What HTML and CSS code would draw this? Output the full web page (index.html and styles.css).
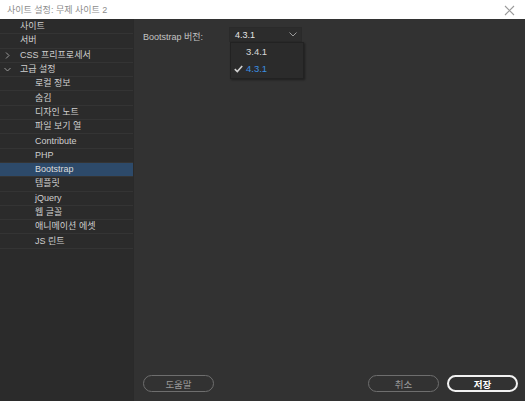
FILE: index.html
```html
<!DOCTYPE html>
<html lang="ko">
<head>
<meta charset="utf-8">
<link rel="stylesheet" href="styles.css">
</head>
<body>
<div class="window">
  <div class="titlebar">
    <span class="title">사이트 설정: 무제 사이트 2</span>
    <svg class="close" width="11" height="11" viewBox="0 0 11 11"><path d="M1 1L10 10M10 1L1 10" stroke="#9a9a9a" stroke-width="1.1"/></svg>
  </div>
  <div class="body">
    <ul class="sidebar">
      <li class="row l0"><span class="chev"></span>사이트</li>
      <li class="row l0"><span class="chev"></span>서버</li>
      <li class="row l0"><span class="chev"><svg width="7" height="7" viewBox="0 0 7 7"><path d="M2 0.5L5 3.5L2 6.5" fill="none" stroke="#9a9a9a" stroke-width="1"/></svg></span>CSS 프리프로세서</li>
      <li class="row l0"><span class="chev"><svg width="7" height="7" viewBox="0 0 7 7"><path d="M0.5 2L3.5 5L6.5 2" fill="none" stroke="#9a9a9a" stroke-width="1"/></svg></span>고급 설정</li>
      <li class="row l1">로컬 정보</li>
      <li class="row l1">숨김</li>
      <li class="row l1">디자인 노트</li>
      <li class="row l1">파일 보기 열</li>
      <li class="row l1">Contribute</li>
      <li class="row l1">PHP</li>
      <li class="row l1 selected">Bootstrap</li>
      <li class="row l1">템플릿</li>
      <li class="row l1">jQuery</li>
      <li class="row l1">웹 글꼴</li>
      <li class="row l1">애니메이션 에셋</li>
      <li class="row l1">JS 린트</li>
    </ul>
    <div class="main">
      <div class="content">
        <div class="field">
          <span class="label">Bootstrap 버전:</span>
          <div class="select-wrap">
            <div class="select">
              <span>4.3.1</span>
              <svg width="8" height="5" viewBox="0 0 8 5"><path d="M0.5 0.5L4 4L7.5 0.5" fill="none" stroke="#9a9a9a" stroke-width="1"/></svg>
            </div>
            <div class="menu">
              <div class="opt"><span class="check"></span>3.4.1</div>
              <div class="opt active"><span class="check"><svg width="9" height="8" viewBox="0 0 9 8"><path d="M0.8 4.2L3.3 6.6L8.2 1" fill="none" stroke="#d0d0d0" stroke-width="1.6"/></svg></span>4.3.1</div>
            </div>
          </div>
        </div>
      </div>
      <div class="footer">
        <button class="btn">도움말</button>
        <div class="spacer"></div>
        <button class="btn">취소</button>
        <button class="btn primary">저장</button>
      </div>
    </div>
  </div>
</div>
</body>
</html>
```
FILE: styles.css
```css
* { box-sizing: border-box; margin: 0; padding: 0; }
html, body { width: 525px; height: 401px; overflow: hidden; }
body {
  font-family: "Liberation Sans", "Noto Sans CJK KR", sans-serif;
  font-size: 9px;
  background: #2b2b2b;
}
.window { display: flex; flex-direction: column; height: 401px; }
.titlebar {
  height: 19px;
  background: #ffffff;
  display: flex;
  align-items: center;
  justify-content: space-between;
  padding: 0 10px 0 7px;
  flex: none;
}
.title { color: #8c8c8c; font-size: 9px; }
.close { margin-top: 1px; }
.body { flex: 1; display: flex; }
.sidebar {
  list-style: none;
  width: 133px;
  background: #2b2b2b;
  flex: none;
  padding-top: 1px;
}
.row {
  height: 14.3px;
  display: flex;
  align-items: center;
  color: #cfcfcf;
  border-bottom: 1px solid #343434;
  line-height: 1;
}
.row.l0 { padding-left: 4px; }
.row.l1 { padding-left: 35px; }
.chev { width: 16px; display: flex; align-items: center; }
.row.selected { background: #2d4a6a; color: #dcdcdc; }
.main {
  flex: 1;
  background: #323232;
  display: flex;
  flex-direction: column;
  border-left: 1px solid #2a2a2a;
}
.content { flex: 1; padding: 8px 0 0 9px; }
.field { display: flex; align-items: flex-start; }
.label { color: #c4c4c4; width: 86px; padding-top: 3px; }
.select-wrap { position: relative; }
.select {
  width: 73px;
  height: 15px;
  background: #2c2c2c;
  border: 1px solid #2a2a2a;
  display: flex;
  align-items: center;
  justify-content: space-between;
  padding: 0 4px 0 5px;
  color: #e6e6e6;
}
.menu {
  position: absolute;
  left: 1px;
  top: 15px;
  width: 74px;
  background: #2b2b2b;
  border: 1px solid #222;
  box-shadow: 1px 1px 2px rgba(0,0,0,0.4);
  padding: 0 0 1px 0;
}
.opt { height: 17px; display: flex; align-items: center; color: #d8d8d8; font-size: 9.5px; }
.opt.active { color: #3b8fe2; }
.check { width: 15px; padding-left: 3px; display: flex; align-items: center; }
.footer {
  display: flex;
  align-items: center;
  padding: 0 7px 9px 9px;
  gap: 8px;
}
.spacer { flex: 1; }
.btn {
  width: 71px;
  height: 17px;
  border-radius: 9px;
  border: 1px solid #6e6e6e;
  background: transparent;
  color: #9a9a9a;
  font-family: "Liberation Sans", "Noto Sans CJK KR", sans-serif;
  font-size: 9.5px;
}
.btn.primary { border: 2px solid #f2f2f2; color: #ffffff; font-weight: bold; }
```
